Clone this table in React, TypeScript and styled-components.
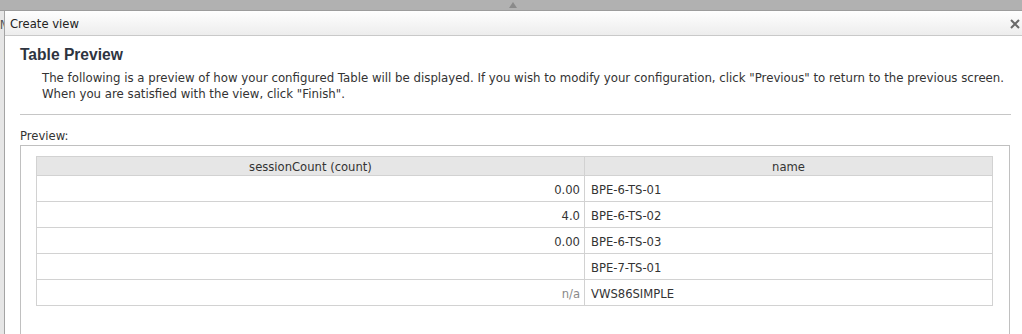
import React from 'react';
import styled, { createGlobalStyle } from 'styled-components';

const GlobalStyle = createGlobalStyle`
  html, body {
    margin: 0;
    padding: 0;
    width: 1022px;
    height: 334px;
    overflow: hidden;
    background: #e4e4e4;
    font-family: "DejaVu Sans", Verdana, sans-serif;
  }
`;

const Page = styled.div`
  display: grid;
  grid-template-rows: 11px 1fr;
  height: 334px;
`;

const TopStrip = styled.div`
  background: #b1b1b1;
  border-bottom: 1px solid #9c9c9c;
  display: flex;
  justify-content: center;
  padding-left: 4px;
`;

const Grip = styled.div`
  width: 0;
  height: 0;
  margin-top: 2px;
  border-left: 4px solid transparent;
  border-right: 4px solid transparent;
  border-bottom: 6px solid #8a8a8a;
`;

const Main = styled.div`
  display: flex;
  min-height: 0;
  overflow: hidden;
`;

const SideStrip = styled.div`
  width: 4px;
  flex-shrink: 0;
  overflow: hidden;
  display: flex;
  flex-direction: column;
  align-items: flex-end;
  background: #e6e6e6;
  font-size: 12px;
  color: #555;
`;

const SideLetter = styled.span<{ $top: number }>`
  margin-top: ${p => p.$top}px;
  margin-right: -6px;
  line-height: 12px;
`;

const Dialog = styled.div`
  flex: 1;
  display: flex;
  flex-direction: column;
  background: #fff;
  border-left: 1px solid #a4a4a4;
  min-width: 0;
`;

const TitleBar = styled.div`
  flex-shrink: 0;
  height: 25px;
  box-sizing: border-box;
  display: flex;
  align-items: center;
  justify-content: space-between;
  padding: 2px 1px 0 5px;
  background: linear-gradient(#fefefe, #ededed);
  border-bottom: 1px solid #c9c9c9;
  font-size: 11.6px;
  color: #222;
`;

const CloseButton = styled.button`
  border: none;
  background: none;
  padding: 0;
  width: 12px;
  height: 12px;
  display: flex;
  cursor: pointer;
`;

const Body = styled.div`
  padding: 9px 11px 0 15px;
  display: flex;
  flex-direction: column;
  flex-shrink: 0;
`;

const Heading = styled.h2`
  margin: 0;
  font-family: "Liberation Sans", Arial, sans-serif;
  font-size: 15.6px;
  font-weight: bold;
  color: #2e3440;
  line-height: 20px;
`;

const Intro = styled.p`
  margin: 5px 0 0;
  padding-left: 22px;
  font-size: 11.75px;
  line-height: 16px;
  color: #333;
`;

const Rule = styled.hr`
  margin: 12px 0 0;
  border: none;
  border-top: 1px solid #c6c6c6;
`;

const SectionLabel = styled.div`
  margin-top: 15px;
  font-size: 11.6px;
  color: #333;
  line-height: 12px;
`;

const PreviewBox = styled.div`
  margin-top: 3px;
  margin-right: 1px;
  height: 200px;
  border: 1px solid #c0c0c0;
  padding: 10px 17px 0 15px;
`;

const Table = styled.table`
  width: 957px;
  border-collapse: collapse;
  table-layout: fixed;
  font-size: 11.6px;
  color: #333;
`;

const HeadCell = styled.th`
  height: 17px;
  padding: 1px 4px 0;
  background: #e6e6e6;
  border: 1px solid #d2d2d2;
  font-weight: normal;
  text-align: center;
  color: #333;
`;

const Cell = styled.td<{ $align?: 'left' | 'right'; $muted?: boolean }>`
  height: 23px;
  padding: 2px 4px 0 6px;
  border: 1px solid #d2d2d2;
  text-align: ${p => p.$align ?? 'left'};
  color: ${p => (p.$muted ? '#8a8a8a' : '#333')};
`;

const rows = [
  { count: '0.00', name: 'BPE-6-TS-01' },
  { count: '4.0', name: 'BPE-6-TS-02' },
  { count: '0.00', name: 'BPE-6-TS-03' },
  { count: '', name: 'BPE-7-TS-01' },
  { count: 'n/a', name: 'VWS86SIMPLE', muted: true },
];

export default function App() {
  return (
    <>
      <GlobalStyle />
      <Page>
        <TopStrip>
          <Grip />
        </TopStrip>
        <Main>
          <SideStrip>
            <SideLetter $top={8}>M</SideLetter>
            <SideLetter $top={18}>L</SideLetter>
          </SideStrip>
          <Dialog>
            <TitleBar>
              <span>Create view</span>
              <CloseButton aria-label="Close">
                <svg width="12" height="12" viewBox="0 0 12 12">
                  <path d="M2 2 L10 10 M10 2 L2 10" stroke="#6a6a6a" strokeWidth="2" />
                </svg>
              </CloseButton>
            </TitleBar>
            <Body>
              <Heading>Table Preview</Heading>
              <Intro>
                The following is a preview of how your configured Table will be displayed. If you wish to modify your configuration, click "Previous" to return to the previous screen.
                <br />
                When you are satisfied with the view, click "Finish".
              </Intro>
              <Rule />
              <SectionLabel>Preview:</SectionLabel>
              <PreviewBox>
                <Table>
                  <colgroup>
                    <col style={{ width: 548 }} />
                    <col />
                  </colgroup>
                  <thead>
                    <tr>
                      <HeadCell>sessionCount (count)</HeadCell>
                      <HeadCell>name</HeadCell>
                    </tr>
                  </thead>
                  <tbody>
                    {rows.map(r => (
                      <tr key={r.name}>
                        <Cell $align="right" $muted={r.muted}>{r.count}</Cell>
                        <Cell>{r.name}</Cell>
                      </tr>
                    ))}
                  </tbody>
                </Table>
              </PreviewBox>
            </Body>
          </Dialog>
        </Main>
      </Page>
    </>
  );
}
